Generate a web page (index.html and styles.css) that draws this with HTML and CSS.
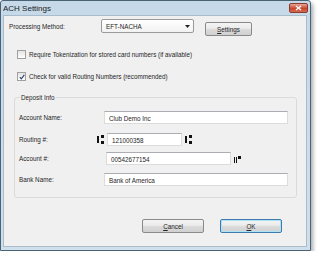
FILE: index.html
```html
<!DOCTYPE html>
<html lang="en">
<head>
    <meta charset="UTF-8">
    <meta name="viewport" content="width=device-width, initial-scale=1.0">
    <title>ACH Settings</title>
    <link rel="stylesheet" href="styles.css">
</head>
<body>
    <div class="dialog">
        <div class="titlebar">
            <span class="title">ACH Settings</span>
            <span class="close">
                <svg width="7" height="6" viewBox="0 0 7 6"><path d="M1 1L6 5M6 1L1 5" stroke="#fff" stroke-width="1.4"/></svg>
            </span>
        </div>
        <div class="content">
            <div class="method-row">
                <span class="method-label">Processing Method:</span>
                <div class="combo">
                    <span>EFT-NACHA</span>
                    <svg width="5" height="3" viewBox="0 0 5 3"><path d="M0 0H5L2.5 3Z" fill="#222"/></svg>
                </div>
                <button type="button" class="btn settings-btn"><u>S</u>ettings</button>
            </div>

            <label class="check-row first">
                <span class="checkbox"></span>
                Require Tokenization for stored card numbers (if available)
            </label>
            <label class="check-row">
                <span class="checkbox">
                    <svg width="6" height="6" viewBox="0 0 6 6"><path d="M0.8 3.2L2.3 4.8L5.3 0.8" stroke="#2a3f6c" stroke-width="1.1" fill="none"/></svg>
                </span>
                Check for valid Routing Numbers (recommended)
            </label>

            <fieldset class="group">
                <legend>Deposit Info</legend>
                <div class="field-row">
                    <span class="field-label">Account Name:</span>
                    <div class="textbox wide">Club Demo Inc</div>
                </div>
                <div class="field-row routing">
                    <span class="field-label">Routing #:</span>
                    <svg class="micr" width="7" height="9" viewBox="0 0 7 9"><rect x="0" y="1" width="2" height="7" fill="#111"/><rect x="4" y="0" width="3" height="3" fill="#111"/><rect x="4" y="6" width="3" height="3" fill="#111"/></svg>
                    <div class="textbox short">121000358</div>
                    <svg class="micr after" width="7" height="9" viewBox="0 0 7 9"><rect x="0" y="1" width="2" height="7" fill="#111"/><rect x="4" y="0" width="3" height="3" fill="#111"/><rect x="4" y="6" width="3" height="3" fill="#111"/></svg>
                </div>
                <div class="field-row account">
                    <span class="field-label">Account #:</span>
                    <div class="textbox medium">00542677154</div>
                    <svg class="micr after" width="8" height="8" viewBox="0 0 8 8"><rect x="0" y="2" width="1" height="6" fill="#111"/><rect x="2" y="2" width="1" height="6" fill="#111"/><rect x="4" y="1" width="3" height="3" fill="#111"/></svg>
                </div>
                <div class="field-row">
                    <span class="field-label">Bank Name:</span>
                    <div class="textbox wide">Bank of America</div>
                </div>
            </fieldset>

            <div class="button-row">
                <button type="button" class="btn"><u>C</u>ancel</button>
                <button type="button" class="btn default"><u>O</u>K</button>
            </div>
        </div>
    </div>
</body>
</html>
```

FILE: styles.css
```css
body {
    margin: 0;
    background-color: #ffffff;
    font-family: "Liberation Sans", Arial, sans-serif;
    font-size: 6.3px;
    color: #262626;
}

.dialog {
    display: flex;
    flex-direction: column;
    width: 309px;
    height: 249px;
    background: linear-gradient(#c6d9e9, #cfdfec);
    border: 1px solid #4a6374;
    border-radius: 3px 3px 0 0;
    box-shadow: 2px 3px 4px rgba(0, 0, 0, 0.35);
}

.titlebar {
    display: flex;
    align-items: center;
    height: 14px;
    padding: 0 2px 0 2px;
}

.title {
    font-size: 8px;
    color: #1b1b1b;
}

.close {
    display: flex;
    align-items: center;
    justify-content: center;
    margin-left: auto;
    width: 17px;
    height: 8px;
    background: linear-gradient(#eaa898, #c9462c 55%, #d46a50);
    border: 1px solid #8a3b2d;
    border-radius: 2px;
}

.content {
    flex: 1;
    display: flex;
    flex-direction: column;
    margin: 0 3px 3px 2px;
    background-color: #f0f0f0;
    border: 1px solid #a9bccb;
}

.method-row {
    display: flex;
    align-items: flex-start;
    padding: 3px 0 0 5px;
}

.method-label {
    width: 92px;
    margin-top: 4px;
}

.combo {
    display: flex;
    align-items: center;
    justify-content: space-between;
    width: 84px;
    height: 12px;
    padding: 0 3px 0 4px;
    background: linear-gradient(#ffffff, #f2f2f2);
    border: 1px solid #9a9a9a;
    border-radius: 2px;
}

.btn {
    height: 14px;
    padding: 0;
    font-family: inherit;
    font-size: 6.3px;
    color: #262626;
    background: linear-gradient(#f4f4f4, #ebebeb 45%, #dcdcdc 50%, #d0d0d0);
    border: 1px solid #8a8a8a;
    border-radius: 2px;
}

.settings-btn {
    width: 47px;
    margin: 3px 0 0 11px;
}

.check-row {
    display: flex;
    align-items: center;
    gap: 3px;
    margin: 14px 0 0 13px;
}

.check-row + .check-row {
    margin-top: 13px;
}

.checkbox {
    display: flex;
    align-items: center;
    justify-content: center;
    width: 7px;
    height: 7px;
    background: linear-gradient(#e4e4e4, #ffffff);
    border: 1px solid #a0a0a0;
}

.group {
    margin: 13px 9px 0 10px;
    padding: 4px 8px 11px 4px;
    border: 1px solid #dadada;
    border-radius: 3px;
}

.group legend {
    padding: 0 1px;
    margin-left: 1px;
}

.field-row {
    display: flex;
    align-items: center;
    margin-top: 6px;
}

.field-row + .field-row {
    margin-top: 8px;
}

.field-row.routing {
    margin-top: 9px;
}

.field-row.account {
    margin-top: 6px;
}

.field-label {
    width: 85px;
}

.textbox {
    height: 13px;
    line-height: 13px;
    padding-left: 4px;
    background-color: #ffffff;
    border: 1px solid #dcdcdc;
    border-top-color: #abadb3;
    box-sizing: border-box;
}

.wide {
    width: 184px;
}

.short {
    width: 75px;
}

.medium {
    width: 125px;
    margin-left: 2px;
}

.routing .field-label {
    width: 78px;
}

.micr {
    margin-right: 3px;
}

.micr.after {
    margin: 0 0 0 3px;
}

.button-row {
    display: flex;
    justify-content: flex-end;
    gap: 16px;
    margin: 21px 24px 0 0;
}

.button-row .btn {
    width: 62px;
}

.btn.default {
    border-color: #3d7bad;
    box-shadow: inset 0 0 0 1px #aee3f7;
}
```
